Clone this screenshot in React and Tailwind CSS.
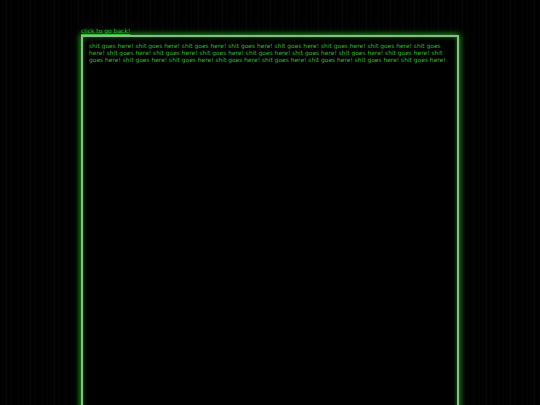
import React from 'react';

const filler = Array(23).fill('shit goes here!').join(' ');

const App = () => {
    return (
        <div className="h-screen w-full overflow-hidden bg-black bg-[repeating-linear-gradient(90deg,#000_0px,#000_6px,#070707_6px,#070707_7px,#000_7px,#000_11px,#050505_11px,#050505_12px)] font-['DejaVu_Sans',Verdana,sans-serif]">
            <div className="mx-auto w-[378px] pt-[27px]">
                {/* back link */}
                <a href="#" className="block text-[6px] leading-[8px] text-[#33bb33] underline">
                    click to go back!
                </a>

                {/* content panel */}
                <div className="h-[400px] border-2 border-[#8fb88f] bg-black px-[6px] py-[5px] shadow-[0_0_6px_1px_#1e9e1e,inset_0_0_4px_#1e7e1e]">
                    <p className="text-[5.95px] leading-[7px] text-[#33bb33]">
                        {filler}
                    </p>
                </div>
            </div>
        </div>
    );
};

export default App;
